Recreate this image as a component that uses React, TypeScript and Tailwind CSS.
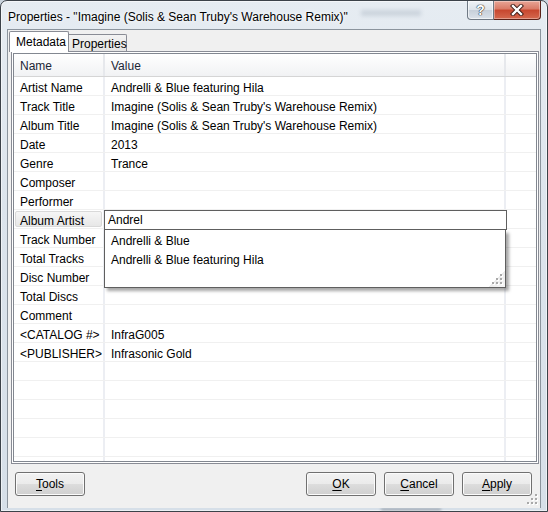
import React from 'react';

const TITLE = "Imagine (Solis & Sean Truby's Warehouse Remix)";

type Row = { name: string; value: string };

const rows: Row[] = [
    { name: 'Artist Name', value: 'Andrelli & Blue featuring Hila' },
    { name: 'Track Title', value: TITLE },
    { name: 'Album Title', value: TITLE },
    { name: 'Date', value: '2013' },
    { name: 'Genre', value: 'Trance' },
    { name: 'Composer', value: '' },
    { name: 'Performer', value: '' },
    { name: 'Album Artist', value: '' },
    { name: 'Track Number', value: '' },
    { name: 'Total Tracks', value: '' },
    { name: 'Disc Number', value: '' },
    { name: 'Total Discs', value: '' },
    { name: 'Comment', value: '' },
    { name: '<CATALOG #>', value: 'InfraG005' },
    { name: '<PUBLISHER>', value: 'Infrasonic Gold' },
    { name: '', value: '' },
    { name: '', value: '' },
    { name: '', value: '' },
    { name: '', value: '' },
    { name: '', value: '' },
    { name: '', value: '' },
];

const suggestions = ['Andrelli & Blue', 'Andrelli & Blue featuring Hila'];

// little dotted size grip, like the Win7 one
const Grip: React.FC<{ className?: string }> = ({ className }) => (
    <svg width="12" height="12" viewBox="0 0 12 12" className={className}>
        {[[8, 0], [8, 4], [4, 4], [8, 8], [4, 8], [0, 8]].map(([x, y]) => (
            <g key={`${x}-${y}`}>
                <rect x={x + 1} y={y + 1} width="2" height="2" fill="#ffffff" />
                <rect x={x} y={y} width="2" height="2" fill="#a9a9a9" />
            </g>
        ))}
    </svg>
);

const DlgButton: React.FC<{ accel: string; rest: string }> = ({ accel, rest }) => (
    <button className="h-[24px] w-[70px] rounded-[3px] border border-[#707070] bg-[linear-gradient(#f2f2f2_0%,#ebebeb_50%,#dddddd_50%,#cfcfcf_100%)] text-[12px] leading-[20px] text-black shadow-[inset_0_0_0_1px_#fbfbfb]">
        <span className="underline underline-offset-[2px]">{accel}</span>{rest}
    </button>
);

export default function App() {
    return (
        <div className="h-[512px] w-[548px] overflow-hidden bg-[#c9d3dd] font-['Liberation_Sans',Arial,sans-serif]">
            <div className="relative flex h-[512px] w-[548px] flex-col rounded-t-[7px] border border-[#3c4249] bg-[linear-gradient(180deg,#e6ecf2_0%,#dce4ec_40%,#d6dfe8_100%)] shadow-[inset_0_0_0_1px_rgba(255,255,255,0.55)]">
                {/* blurred window behind the glass */}
                <div className="pointer-events-none absolute left-[360px] top-[9px] h-[6px] w-[60px] bg-[#8e9bab] opacity-30 blur-[2px]" />
                <div className="pointer-events-none absolute bottom-[0px] left-[380px] h-[3px] w-[60px] bg-[#6d7884] opacity-50 blur-[1.5px]" />

                {/* title bar */}
                <div className="relative flex h-[28px] shrink-0 items-start">
                    <div className="pl-[7px] pt-[9px] text-[12px] leading-[15px] text-black [text-shadow:0_0_6px_#ffffff,0_0_3px_#ffffff]">
                        Properties - "{TITLE}"
                    </div>
                    <div className="ml-auto mr-[6px] flex">
                        <div className="flex h-[19px] w-[27px] items-center justify-center rounded-bl-[4px] border border-t-0 border-[#6f7984] bg-[linear-gradient(#eef2f6_0%,#dce3ea_50%,#c6cfd9_50%,#dbe2ea_100%)] shadow-[inset_0_0_0_1px_rgba(255,255,255,0.6)]">
                            <span className="text-[14px] font-bold leading-none text-white [text-shadow:0_0_1px_#2b2b2b,0_0_1px_#2b2b2b,0_0_1px_#2b2b2b]">?</span>
                        </div>
                        <div className="flex h-[19px] w-[47px] items-center justify-center rounded-br-[4px] border border-l-0 border-t-0 border-[#5a2118] bg-[linear-gradient(#e8a596_0%,#d97a66_45%,#c7462e_50%,#d4694f_100%)] shadow-[inset_0_0_0_1px_rgba(255,255,255,0.35)]">
                            <svg width="14" height="12" viewBox="0 0 14 12">
                                <path d="M3 2 L11 10 M11 2 L3 10" stroke="#3a1a14" strokeWidth="4.2" strokeLinecap="square" />
                                <path d="M3 2 L11 10 M11 2 L3 10" stroke="#ffffff" strokeWidth="2.4" strokeLinecap="square" />
                            </svg>
                        </div>
                    </div>
                </div>

                {/* client area */}
                <div className="relative ml-[6px] flex w-[534px] flex-1 flex-col border border-b-0 border-[#8b949d] bg-[#f0f0f0]">
                    {/* tabs */}
                    <div className="flex h-[21px] shrink-0 items-end pl-[1px]">
                        <div className="relative z-10 -mb-[1px] flex h-[21px] w-[60px] items-start rounded-t-[2px] border border-b-0 border-[#898c95] bg-white pl-[6px] pt-[3px] text-[12px] leading-[15px] text-black">
                            Metadata
                        </div>
                        <div className="flex h-[17px] w-[58px] items-start rounded-tr-[2px] border-r border-t border-[#898c95] bg-[linear-gradient(#f3f3f3,#e4e4e4)] pl-[3px] pt-[2px] text-[12px] leading-[14px] text-black">
                            Properties
                        </div>
                    </div>

                    {/* tab page */}
                    <div className="ml-[3px] h-[413px] w-[528px] shrink-0 border border-[#898c95] bg-white p-[1px]">
                        <div className="h-[409px] w-[524px] overflow-hidden border border-[#828790] bg-white">
                            <div className="relative h-[407px] w-[522px]">
                                {/* header */}
                                <div className="flex h-[23px] border-b border-[#d5d5d5] bg-[linear-gradient(#ffffff,#f1f2f4)] text-[12px] text-[#1c2636]">
                                    <div className="flex w-[91px] shrink-0 items-center border-r-2 border-[#e6e8ec] pl-[6px] pt-[2px]">Name</div>
                                    <div className="flex w-[401px] shrink-0 items-center border-r-2 border-[#e6e8ec] pl-[6px] pt-[2px]">Value</div>
                                    <div className="flex-1" />
                                </div>

                                {/* rows */}
                                {rows.map((r, i) => (
                                    <div key={i} className="flex h-[19px] border-b border-[#f0f0f0] text-[12px] leading-[18px] text-black">
                                        <div className="flex w-[91px] shrink-0 border-r-2 border-[#eceef3]">
                                            {r.name === 'Album Artist' ? (
                                                <div className="m-[1px] flex-1 rounded-[2px] border border-[#d9d9d9] bg-[linear-gradient(#f6f6f6,#e7e7e7)] pl-[4px] pt-[2px] leading-[14px]">{r.name}</div>
                                            ) : (
                                                <div className="pl-[6px] pt-[2px]">{r.name}</div>
                                            )}
                                        </div>
                                        <div className="w-[401px] shrink-0 border-r-2 border-[#eceef3] pl-[6px] pt-[2px]">{r.value}</div>
                                        <div className="flex-1" />
                                    </div>
                                ))}

                                {/* in-place editor */}
                                <div className="absolute left-[90px] top-[156px] h-[20px] w-[403px] border border-[#5f5f5f] bg-white pl-[3px] text-[12px] leading-[19px] text-black">
                                    Andrel
                                </div>

                                {/* autocomplete dropdown */}
                                <div className="absolute left-[90px] top-[176px] h-[58px] w-[402px] border border-t-0 border-[#5f5f5f] bg-white pt-[1px] text-[12px] text-black shadow-[3px_3px_3px_rgba(0,0,0,0.35)]">
                                    {suggestions.map(s => (
                                        <div key={s} className="h-[19px] pl-[6px] leading-[20px]">{s}</div>
                                    ))}
                                    <div className="absolute bottom-0 right-0 h-[16px] w-[16px] bg-[linear-gradient(135deg,transparent_50%,#ececec_50%,#f7f7f7_100%)]" />
                                    <Grip className="absolute bottom-[1px] right-[1px]" />
                                </div>
                            </div>
                        </div>
                    </div>

                    {/* dialog buttons */}
                    <div className="mt-[8px] flex shrink-0 items-start pl-[7px] pr-[8px]">
                        <DlgButton accel="T" rest="ools" />
                        <div className="ml-auto flex gap-[8px]">
                            <DlgButton accel="O" rest="K" />
                            <DlgButton accel="C" rest="ancel" />
                            <DlgButton accel="A" rest="pply" />
                        </div>
                    </div>

                    <Grip className="absolute bottom-[2px] right-[1px]" />
                </div>

                <div className="h-[3px] shrink-0" />
            </div>
        </div>
    );
}
